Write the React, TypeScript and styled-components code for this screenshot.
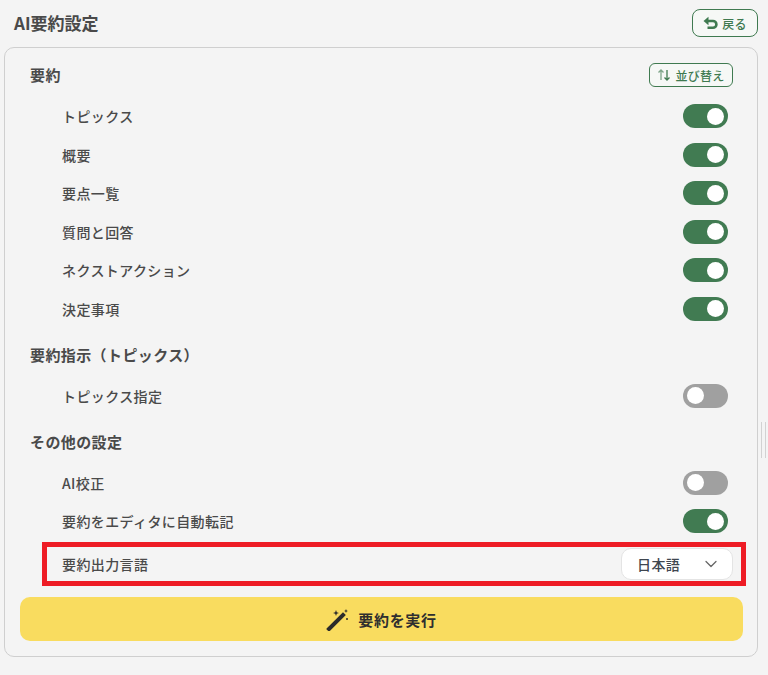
import styled, { createGlobalStyle } from "styled-components";
import { ChevronDown } from "lucide-react";

const GlobalStyle = createGlobalStyle`
	html, body {
		margin: 0;
		padding: 0;
		background: #f4f4f4;
		font-family: "Noto Sans CJK JP", "Noto Sans", sans-serif;
		color: #4a4a4a;
	}
`;

const Page = styled.div`
	position: relative;
	width: 768px;
	height: 675px;
	padding: 9px 10px 0 4px;
	box-sizing: border-box;
	overflow: hidden;
`;

const Header = styled.header`
	display: flex;
	justify-content: space-between;
	align-items: center;
	height: 28px;
	padding-left: 10px;
	margin-bottom: 10px;
`;

const PageTitle = styled.h1`
	margin: 0;
	font-size: 17px;
	font-weight: 700;
	line-height: 30px;
`;

const OutlineButton = styled.button<{ $w: number; $h: number; $r: number }>`
	display: flex;
	align-items: center;
	justify-content: center;
	gap: 4px;
	width: ${(p) => p.$w}px;
	height: ${(p) => p.$h}px;
	padding: 0;
	box-sizing: border-box;
	border: 1px solid #3f7a50;
	border-radius: ${(p) => p.$r}px;
	background: #f6f8f6;
	color: #3f7a50;
	font-family: inherit;
	font-size: 12px;
	font-weight: 500;
	letter-spacing: 0.3px;
`;

const Panel = styled.section`
	height: 610px;
	box-sizing: border-box;
	padding: 15px 14px 0 15px;
	border: 1px solid #cfcfcf;
	border-radius: 10px;
`;

const SectionHead = styled.div<{ $top: number }>`
	display: flex;
	justify-content: space-between;
	align-items: center;
	height: 24px;
	margin-top: ${(p) => p.$top}px;
	padding: 0 10px;
`;

const SectionTitle = styled.h2`
	margin: 0 0 2px;
	font-size: 15px;
	font-weight: 700;
	letter-spacing: 0.4px;
`;

const RowList = styled.div<{ $top: number }>`
	display: flex;
	flex-direction: column;
	gap: 14.5px;
	margin-top: ${(p) => p.$top}px;
`;

const Row = styled.div`
	display: flex;
	justify-content: space-between;
	align-items: center;
	height: 24px;
	padding: 0 15px 0 42px;
`;

const RowLabel = styled.span`
	font-size: 14px;
	font-weight: 500;
	letter-spacing: 0.4px;
`;

const Toggle = styled.span<{ $on: boolean }>`
	display: flex;
	justify-content: ${(p) => (p.$on ? "flex-end" : "flex-start")};
	align-items: center;
	width: 45px;
	height: 24px;
	padding: 0 4px;
	box-sizing: border-box;
	border-radius: 12px;
	background: ${(p) => (p.$on ? "#417b52" : "#a0a0a0")};

	&::after {
		content: "";
		width: 17px;
		height: 17px;
		border-radius: 50%;
		background: #fff;
	}
`;

const Highlight = styled.div`
	display: flex;
	justify-content: space-between;
	align-items: center;
	height: 44px;
	margin: 9px -3px 0 22px;
	padding: 0 8px 0 15px;
	box-sizing: border-box;
	border: 5px solid #ee1c25;
`;

const Select = styled.div`
	display: flex;
	justify-content: space-between;
	align-items: center;
	width: 112px;
	height: 32px;
	padding: 0 11px 0 15px;
	box-sizing: border-box;
	border: 1px solid #e4e4e4;
	border-radius: 10px;
	background: #fff;
	font-size: 14px;
	font-weight: 500;
	letter-spacing: 0.4px;
	color: #3f4650;
`;

const RunButton = styled.button`
	display: flex;
	justify-content: center;
	align-items: center;
	gap: 8px;
	width: 723px;
	height: 44px;
	margin-top: 11px;
	padding: 0;
	border: none;
	border-radius: 10px;
	background: #f9dc5f;
	color: #2f2f2f;
	font-family: inherit;
	font-size: 15px;
	font-weight: 700;
	letter-spacing: 0.7px;
`;

const Splitter = styled.div`
	position: absolute;
	left: 761px;
	top: 422px;
	width: 5px;
	height: 36px;
	box-sizing: border-box;
	border-left: 1px solid #d2d2d2;
	border-right: 1px solid #d2d2d2;
`;

const BackIcon = () => (
	<svg width="15" height="15" viewBox="0 0 15 15" fill="none">
		<path d="M5 5h5a3.4 3.4 0 0 1 0 6.8H4.5" stroke="#3f7a50" strokeWidth="2.6" />
		<path d="M0.5 5 5.5 0.8v8.4z" fill="#3f7a50" />
	</svg>
);

const SortIcon = () => (
	<svg width="14" height="14" viewBox="0 0 14 14" fill="none" stroke="#3f7a50" strokeWidth="1.3">
		<path d="M4 12V2M1.5 4.5 4 2l2.5 2.5" opacity="0.65" />
		<path d="M10 2v10M7.5 9.5 10 12l2.5-2.5" />
	</svg>
);

const WandIcon = () => (
	<svg width="24" height="24" viewBox="0 0 24 24" fill="#2b2b2b">
		<path d="M3 22 17 8" stroke="#2b2b2b" strokeWidth="4" strokeLinecap="square" />
		<path d="M10 3l.8 2.2L13 6l-2.2.8L10 9l-.8-2.2L7 6l2.2-.8z" />
		<path d="M20 2l.6 1.4L22 4l-1.4.6L20 6l-.6-1.4L18 4l1.4-.6z" />
		<circle cx="21" cy="12" r="1" />
	</svg>
);

const summaryRows = ["トピックス", "概要", "要点一覧", "質問と回答", "ネクストアクション", "決定事項"];

const App = () => (
	<Page>
		<GlobalStyle />
		<Header>
			<PageTitle>AI要約設定</PageTitle>
			<OutlineButton $w={66} $h={28} $r={8}>
				<BackIcon />
				戻る
			</OutlineButton>
		</Header>
		<Panel>
			<SectionHead $top={0}>
				<SectionTitle>要約</SectionTitle>
				<OutlineButton $w={84} $h={24} $r={6}>
					<SortIcon />
					並び替え
				</OutlineButton>
			</SectionHead>
			<RowList $top={17}>
				{summaryRows.map((label) => (
					<Row key={label}>
						<RowLabel>{label}</RowLabel>
						<Toggle $on />
					</Row>
				))}
			</RowList>
			<SectionHead $top={23}>
				<SectionTitle>要約指示（トピックス）</SectionTitle>
			</SectionHead>
			<RowList $top={16}>
				<Row>
					<RowLabel>トピックス指定</RowLabel>
					<Toggle $on={false} />
				</Row>
			</RowList>
			<SectionHead $top={23}>
				<SectionTitle>その他の設定</SectionTitle>
			</SectionHead>
			<RowList $top={16}>
				<Row>
					<RowLabel>AI校正</RowLabel>
					<Toggle $on={false} />
				</Row>
				<Row>
					<RowLabel>要約をエディタに自動転記</RowLabel>
					<Toggle $on />
				</Row>
			</RowList>
			<Highlight>
				<RowLabel>要約出力言語</RowLabel>
				<Select>
					日本語
					<ChevronDown size={20} strokeWidth={1.5} color="#666" />
				</Select>
			</Highlight>
			<RunButton>
				<WandIcon />
				要約を実行
			</RunButton>
		</Panel>
		<Splitter />
	</Page>
);

export default App;
